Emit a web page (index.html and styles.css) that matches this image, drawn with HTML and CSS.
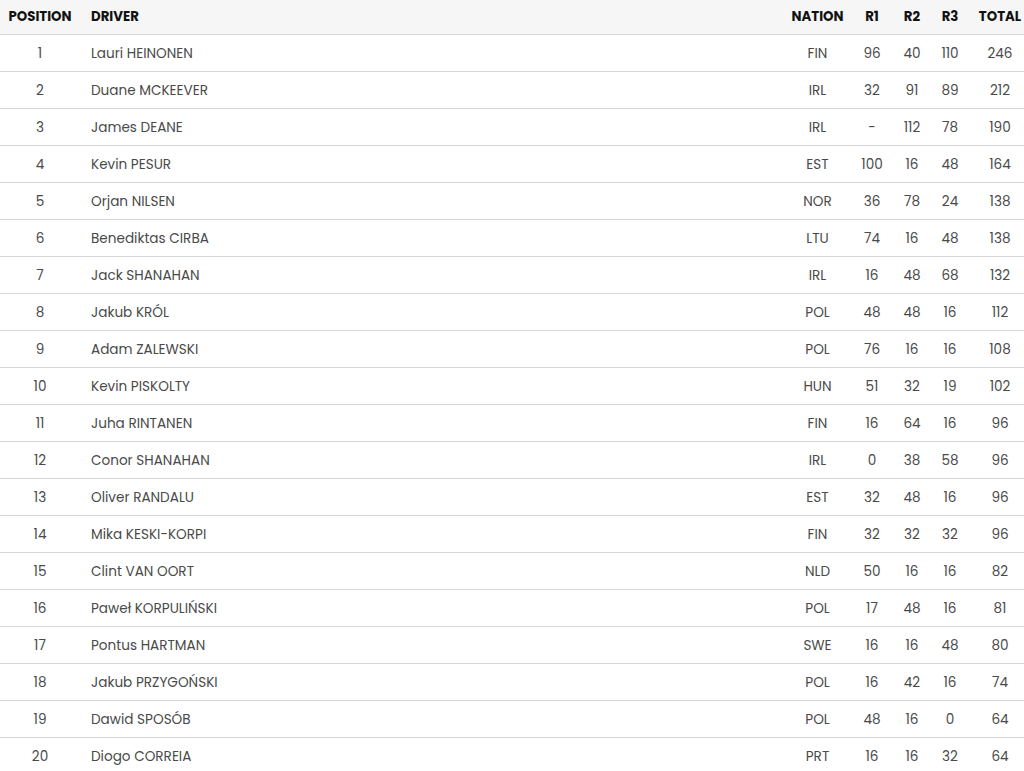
FILE: index.html
```html
<!DOCTYPE html>
<html>
<head>
<meta charset="utf-8">
<link rel="stylesheet" href="styles.css">
</head>
<body>
<table class="standings">
<colgroup>
<col class="c-pos"><col class="c-driver"><col class="c-nation"><col class="c-r1"><col class="c-r2"><col class="c-r3"><col class="c-total">
</colgroup>
<thead>
<tr><th class="pos">POSITION</th><th class="driver">DRIVER</th><th>NATION</th><th>R1</th><th>R2</th><th>R3</th><th class="total">TOTAL</th></tr>
</thead>
<tbody>
<tr><td>1</td><td class="driver">Lauri HEINONEN</td><td>FIN</td><td>96</td><td>40</td><td>110</td><td class="total">246</td></tr>
<tr><td>2</td><td class="driver">Duane MCKEEVER</td><td>IRL</td><td>32</td><td>91</td><td>89</td><td class="total">212</td></tr>
<tr><td>3</td><td class="driver">James DEANE</td><td>IRL</td><td>-</td><td>112</td><td>78</td><td class="total">190</td></tr>
<tr><td>4</td><td class="driver">Kevin PESUR</td><td>EST</td><td>100</td><td>16</td><td>48</td><td class="total">164</td></tr>
<tr><td>5</td><td class="driver">Orjan NILSEN</td><td>NOR</td><td>36</td><td>78</td><td>24</td><td class="total">138</td></tr>
<tr><td>6</td><td class="driver">Benediktas CIRBA</td><td>LTU</td><td>74</td><td>16</td><td>48</td><td class="total">138</td></tr>
<tr><td>7</td><td class="driver">Jack SHANAHAN</td><td>IRL</td><td>16</td><td>48</td><td>68</td><td class="total">132</td></tr>
<tr><td>8</td><td class="driver">Jakub KRÓL</td><td>POL</td><td>48</td><td>48</td><td>16</td><td class="total">112</td></tr>
<tr><td>9</td><td class="driver">Adam ZALEWSKI</td><td>POL</td><td>76</td><td>16</td><td>16</td><td class="total">108</td></tr>
<tr><td>10</td><td class="driver">Kevin PISKOLTY</td><td>HUN</td><td>51</td><td>32</td><td>19</td><td class="total">102</td></tr>
<tr><td>11</td><td class="driver">Juha RINTANEN</td><td>FIN</td><td>16</td><td>64</td><td>16</td><td class="total">96</td></tr>
<tr><td>12</td><td class="driver">Conor SHANAHAN</td><td>IRL</td><td>0</td><td>38</td><td>58</td><td class="total">96</td></tr>
<tr><td>13</td><td class="driver">Oliver RANDALU</td><td>EST</td><td>32</td><td>48</td><td>16</td><td class="total">96</td></tr>
<tr><td>14</td><td class="driver">Mika KESKI-KORPI</td><td>FIN</td><td>32</td><td>32</td><td>32</td><td class="total">96</td></tr>
<tr><td>15</td><td class="driver">Clint VAN OORT</td><td>NLD</td><td>50</td><td>16</td><td>16</td><td class="total">82</td></tr>
<tr><td>16</td><td class="driver">Paweł KORPULIŃSKI</td><td>POL</td><td>17</td><td>48</td><td>16</td><td class="total">81</td></tr>
<tr><td>17</td><td class="driver">Pontus HARTMAN</td><td>SWE</td><td>16</td><td>16</td><td>48</td><td class="total">80</td></tr>
<tr><td>18</td><td class="driver">Jakub PRZYGOŃSKI</td><td>POL</td><td>16</td><td>42</td><td>16</td><td class="total">74</td></tr>
<tr><td>19</td><td class="driver">Dawid SPOSÓB</td><td>POL</td><td>48</td><td>16</td><td>0</td><td class="total">64</td></tr>
<tr><td>20</td><td class="driver">Diogo CORREIA</td><td>PRT</td><td>16</td><td>16</td><td>32</td><td class="total">64</td></tr>
</tbody>
</table>
</body>
</html>
```

FILE: styles.css
```css
html, body {
  margin: 0;
  padding: 0;
  background: #ffffff;
}
body {
  font-family: Poppins, "Open Sans", "Liberation Sans", sans-serif;
  font-size: 13.6px;
  color: #4a4a4a;
}
.standings {
  width: 1024px;
  border-collapse: collapse;
  table-layout: fixed;
}
.c-pos { width: 80px; }
.c-driver { width: auto; }
.c-nation { width: 67px; }
.c-r1 { width: 42px; }
.c-r2 { width: 38px; }
.c-r3 { width: 38px; }
.c-total { width: 55px; }
.standings th {
  background: #f6f6f6;
  color: #111111;
  font-weight: 700;
  font-size: 13.3px;
  height: 34px;
  padding: 0;
  text-align: center;
  border-bottom: 1px solid #d6d6d6;
  white-space: nowrap;
}
.standings td {
  height: 37px;
  box-sizing: border-box;
  padding: 2px 0 0 0;
  text-align: center;
  border-bottom: 1px solid #d6d6d6;
  white-space: nowrap;
}
.standings .driver {
  text-align: left;
  padding-left: 11px;
}
.standings .total {
  padding-left: 7px;
}
```
